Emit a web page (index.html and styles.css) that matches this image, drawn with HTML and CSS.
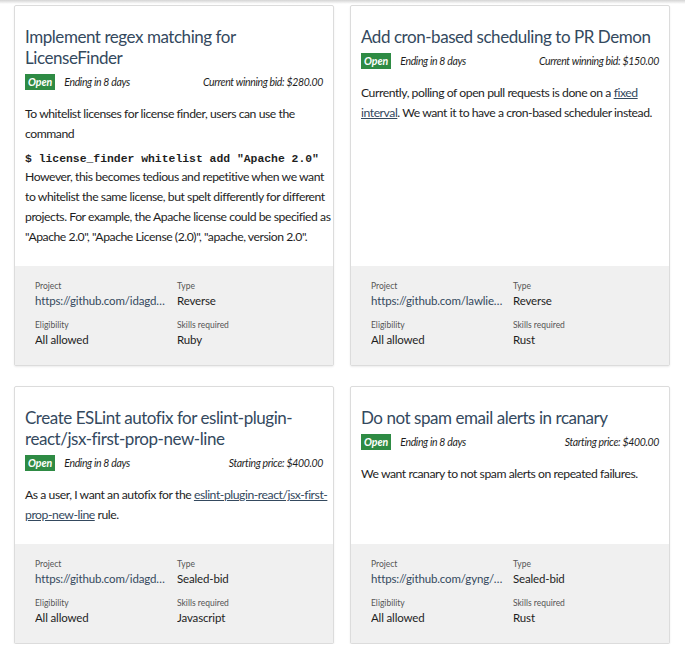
FILE: index.html
```html
<!DOCTYPE html>
<html>
<head>
<meta charset="utf-8">
<link rel="stylesheet" href="styles.css">
</head>
<body>
<div class="topshade"></div>
<div class="grid">
  <div class="card">
    <div class="card-body">
      <h2 class="title">Implement regex matching for LicenseFinder</h2>
      <div class="meta">
        <span class="badge">Open</span>
        <span class="ending">Ending in 8 days</span>
        <span class="price">Current winning bid: $280.00</span>
      </div>
      <p>To whitelist licenses for license finder, users can use the command</p>
      <pre class="code">$ license_finder whitelist add "Apache 2.0"</pre>
      <p class="after-code">However, this becomes tedious and repetitive when we want to whitelist the same license, but spelt differently for different projects. For example, the Apache license could be specified as "Apache 2.0", "Apache License (2.0)", "apache, version 2.0".</p>
    </div>
    <div class="card-foot">
      <div class="field"><div class="label">Project</div><div class="value link">https://github.com/idagdelen/LicenseFinder</div></div>
      <div class="field"><div class="label">Type</div><div class="value">Reverse</div></div>
      <div class="field"><div class="label">Eligibility</div><div class="value">All allowed</div></div>
      <div class="field"><div class="label">Skills required</div><div class="value">Ruby</div></div>
    </div>
  </div>

  <div class="card">
    <div class="card-body">
      <h2 class="title">Add cron-based scheduling to PR Demon</h2>
      <div class="meta">
        <span class="badge">Open</span>
        <span class="ending">Ending in 8 days</span>
        <span class="price">Current winning bid: $150.00</span>
      </div>
      <p>Currently, polling of open pull requests is done on a <a href="#">fixed interval</a>. We want it to have a cron-based scheduler instead.</p>
    </div>
    <div class="card-foot">
      <div class="field"><div class="label">Project</div><div class="value link">https://github.com/lawliet89/pr_demon</div></div>
      <div class="field"><div class="label">Type</div><div class="value">Reverse</div></div>
      <div class="field"><div class="label">Eligibility</div><div class="value">All allowed</div></div>
      <div class="field"><div class="label">Skills required</div><div class="value">Rust</div></div>
    </div>
  </div>

  <div class="card">
    <div class="card-body">
      <h2 class="title">Create ESLint autofix for eslint-plugin-react/jsx-first-prop-new-line</h2>
      <div class="meta">
        <span class="badge">Open</span>
        <span class="ending">Ending in 8 days</span>
        <span class="price">Starting price: $400.00</span>
      </div>
      <p>As a user, I want an autofix for the <a href="#">eslint-plugin-react/jsx-first-prop-new-line</a> rule.</p>
    </div>
    <div class="card-foot">
      <div class="field"><div class="label">Project</div><div class="value link">https://github.com/idagdelen/eslint-plugin-react</div></div>
      <div class="field"><div class="label">Type</div><div class="value">Sealed-bid</div></div>
      <div class="field"><div class="label">Eligibility</div><div class="value">All allowed</div></div>
      <div class="field"><div class="label">Skills required</div><div class="value">Javascript</div></div>
    </div>
  </div>

  <div class="card">
    <div class="card-body">
      <h2 class="title">Do not spam email alerts in rcanary</h2>
      <div class="meta">
        <span class="badge">Open</span>
        <span class="ending">Ending in 8 days</span>
        <span class="price">Starting price: $400.00</span>
      </div>
      <p>We want rcanary to not spam alerts on repeated failures.</p>
    </div>
    <div class="card-foot">
      <div class="field"><div class="label">Project</div><div class="value link">https://github.com/gyng/rcanary</div></div>
      <div class="field"><div class="label">Type</div><div class="value">Sealed-bid</div></div>
      <div class="field"><div class="label">Eligibility</div><div class="value">All allowed</div></div>
      <div class="field"><div class="label">Skills required</div><div class="value">Rust</div></div>
    </div>
  </div>
</div>
</body>
</html>
```

FILE: styles.css
```css
* { box-sizing: border-box; }
html, body { margin: 0; padding: 0; background: #fff; }
body {
  font-family: "Lato", "Liberation Sans", sans-serif;
  color: #1e1e1e;
  font-size: 12.2px;
}
.topshade {
  height: 4px;
  background: linear-gradient(#d4d4d4, #fff);
}
.grid {
  display: grid;
  grid-template-columns: 320px 320px;
  column-gap: 16px;
  row-gap: 20px;
  padding: 1px 15px 0 14px;
}
.card {
  display: flex;
  flex-direction: column;
  border: 1px solid #dcdcdc;
  border-radius: 2px;
  box-shadow: 0 1px 2px rgba(0,0,0,0.08);
  background: #fff;
}
.card-body {
  flex: 1;
  padding: 20px 10px 19px;
}
.title {
  margin: 0;
  font-size: 17px;
  letter-spacing: -0.45px;
  line-height: 21px;
  font-weight: 400;
  color: #34495e;
}
.meta {
  display: flex;
  align-items: center;
  margin-top: 6px;
  height: 16px;
  font-size: 10.5px;
  letter-spacing: -0.35px;
  font-style: italic;
  color: #1e1e1e;
}
.badge {
  background: #2e8b44;
  color: #fff;
  font-weight: 700;
  letter-spacing: 0;
  padding: 0 3px;
  height: 16px;
  line-height: 16px;
  margin-right: 9px;
}
.price { margin-left: auto; }
p {
  margin: 14px -9px 0 0;
  line-height: 20px;
  letter-spacing: -0.45px;
}
p.after-code { margin-top: 0; }
.code {
  margin: 7px 0 0;
  font-family: "Liberation Mono", monospace;
  font-size: 11.4px;
  font-weight: 700;
  line-height: 16px;
}
a { color: #34495e; text-decoration: underline; }
.card-foot {
  background: #f0f0f0;
  padding: 14px 20px 16px;
  display: grid;
  grid-template-columns: 142px 1fr;
  row-gap: 9px;
}
.label {
  font-size: 8.5px;
  line-height: 12px;
  color: #555;
}
.value {
  font-size: 11.5px;
  letter-spacing: -0.15px;
  line-height: 18px;
  color: #1e1e1e;
  white-space: nowrap;
  overflow: hidden;
  text-overflow: ellipsis;
  padding-right: 8px;
}
.value.link { color: #34495e; }
```
